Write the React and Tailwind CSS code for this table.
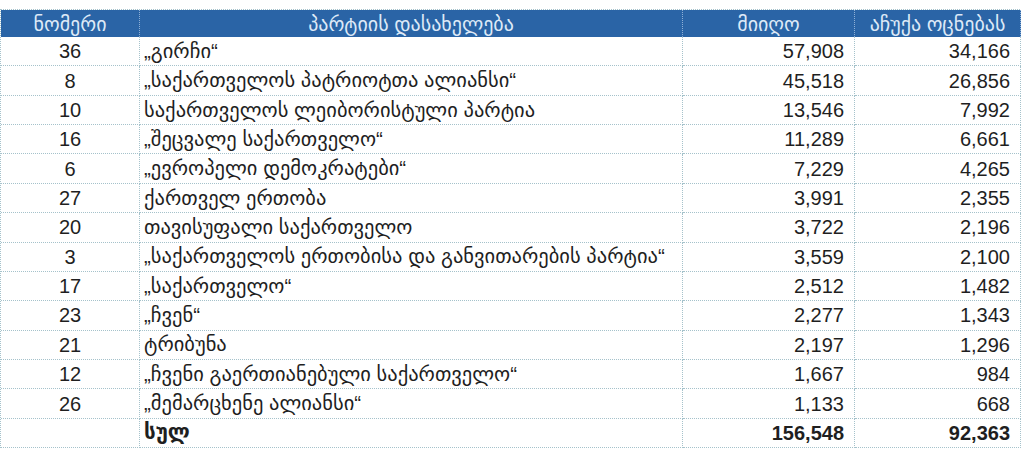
import React from 'react';

const rows = [
  ['36', '„გირჩი“', '57,908', '34,166'],
  ['8', '„საქართველოს პატრიოტთა ალიანსი“', '45,518', '26,856'],
  ['10', 'საქართველოს ლეიბორისტული პარტია', '13,546', '7,992'],
  ['16', '„შეცვალე საქართველო“', '11,289', '6,661'],
  ['6', '„ევროპელი დემოკრატები“', '7,229', '4,265'],
  ['27', 'ქართველ ერთობა', '3,991', '2,355'],
  ['20', 'თავისუფალი საქართველო', '3,722', '2,196'],
  ['3', '„საქართველოს ერთობისა და განვითარების პარტია“', '3,559', '2,100'],
  ['17', '„საქართველო“', '2,512', '1,482'],
  ['23', '„ჩვენ“', '2,277', '1,343'],
  ['21', 'ტრიბუნა', '2,197', '1,296'],
  ['12', '„ჩვენი გაერთიანებული საქართველო“', '1,667', '984'],
  ['26', '„მემარცხენე ალიანსი“', '1,133', '668'],
];

const cell = 'border-r border-b border-dotted border-[#a5c2cb] flex items-center h-[29.36px]';

export default function App() {
  return (
    <div className="w-[1024px] h-[449px] bg-white pt-[9px] overflow-hidden font-['Liberation_Sans','DejaVu_Sans',sans-serif] text-[20px] text-[#1f1f1f]">
      <div className="w-[1020px] grid grid-cols-[139px_543px_172px_166px] border-l border-t border-dotted border-[#a5c2cb]">
        {['ნომერი', 'პარტიის დასახელება', 'მიიღო', 'აჩუქა ოცნებას'].map((h) => (
          <div
            key={h}
            className="h-[27px] bg-[#2a64a6] text-[#dde9f7] text-[20px] flex items-center justify-center border-r border-dotted border-[#8fb0d6] leading-none"
          >
            {h}
          </div>
        ))}
        {rows.map((r) => (
          <React.Fragment key={r[0]}>
            <div className={`${cell} justify-center`}>{r[0]}</div>
            <div className={`${cell} pl-[4px] whitespace-nowrap text-[20.5px]`}>{r[1]}</div>
            <div className={`${cell} justify-end pr-[10px]`}>{r[2]}</div>
            <div className={`${cell} justify-end pr-[10px]`}>{r[3]}</div>
          </React.Fragment>
        ))}
        <div className={cell}></div>
        <div className={`${cell} pl-[4px] text-[20.5px] font-semibold`}>სულ</div>
        <div className={`${cell} justify-end pr-[10px] font-bold`}>156,548</div>
        <div className={`${cell} justify-end pr-[10px] font-bold`}>92,363</div>
      </div>
    </div>
  );
}
